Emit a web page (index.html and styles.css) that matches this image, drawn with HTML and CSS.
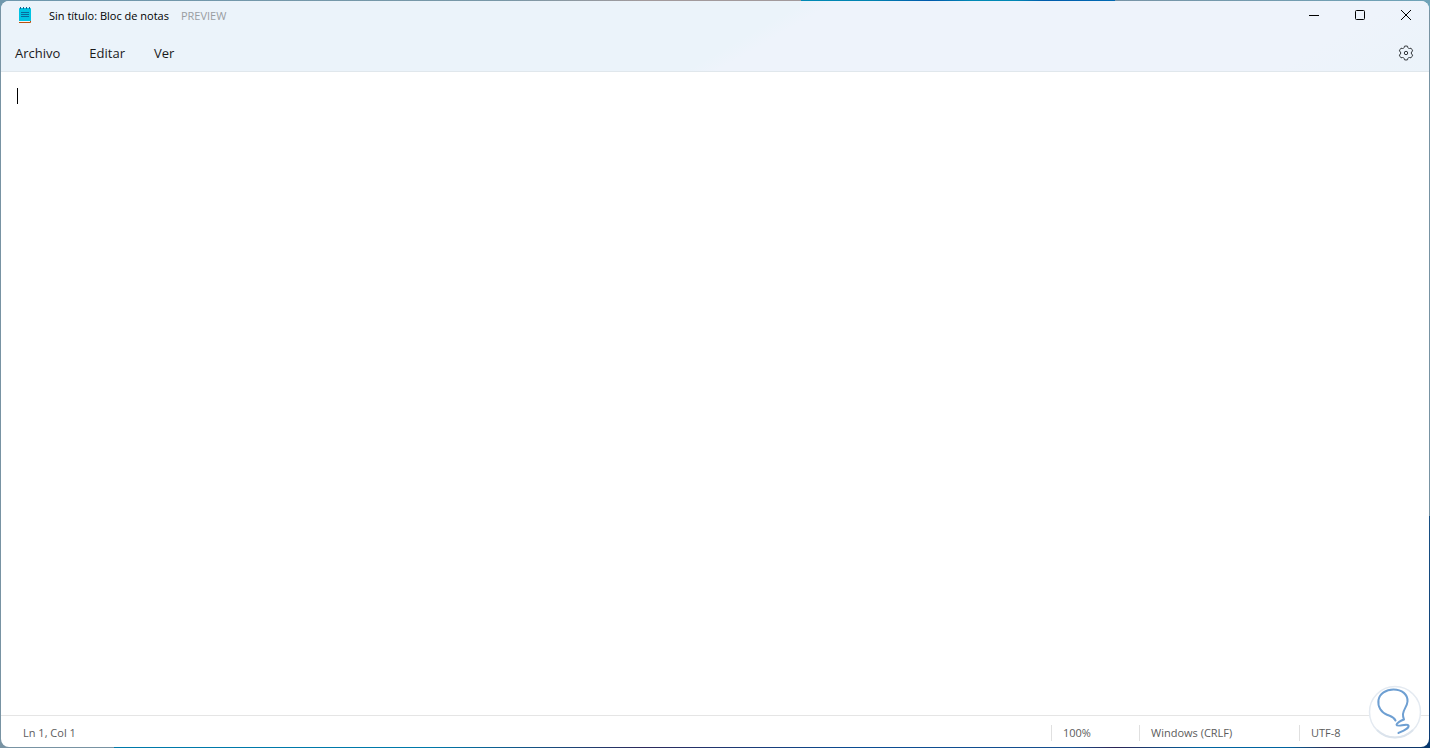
FILE: index.html
```html
<!DOCTYPE html>
<html lang="es">
<head>
    <meta charset="UTF-8">
    <meta name="viewport" content="width=device-width, initial-scale=1.0">
    <link rel="stylesheet" href="styles.css">
    <title>Sin título: Bloc de notas</title>
</head>
<body>
    <div class="window">
        <header class="header">
            <div class="titlebar">
                <svg class="app-icon" width="14" height="18" viewBox="0 0 14 18">
                    <path d="M1 15h12v1q0 1-1 1H1z" fill="#b9500f"/>
                    <path d="M1 14h11v2H1z" fill="#f4f4f4"/>
                    <path d="M1 3q0-1 1-1h10q1 0 1 1v12H1z" fill="#00c3e3"/>
                    <path d="M2.500 1v2M5.500 1v2M8.500 1v2M11.500 1v2" stroke="#17618f"/>
                    <path d="M3 6.500h8M3 8.500h8M3 10.500h8" stroke="#086a9b"/>
                </svg>
                <h1 class="title">Sin título: Bloc de notas</h1>
                <span class="preview">PREVIEW</span>
                <div class="controls">
                    <button type="button" aria-label="Minimizar">
                        <svg width="12" height="12" viewBox="0 0 12 12"><path d="M1 6.500h10"/></svg>
                    </button>
                    <button type="button" aria-label="Maximizar">
                        <svg width="12" height="12" viewBox="0 0 12 12"><rect x="1.500" y="1.500" width="9" height="9" rx="1"/></svg>
                    </button>
                    <button type="button" aria-label="Cerrar">
                        <svg width="12" height="12" viewBox="0 0 12 12"><path d="M1 1l10 10M11 1L1 11"/></svg>
                    </button>
                </div>
            </div>
            <nav class="menubar">
                <button type="button">Archivo</button>
                <button type="button">Editar</button>
                <button type="button">Ver</button>
                <button type="button" class="settings" aria-label="Configuración">
                    <svg width="16" height="16" viewBox="0 0 16 16">
                        <path d="M6.500 1.200Q8 .8 9.500 1.200L9.900 2.600Q10.400 3.700 11.500 3.500L13 3.200Q14.100 4.400 14.600 5.900L13.600 7Q12.800 8 13.600 9L14.600 10.100Q14.100 11.600 13 12.800L11.500 12.500Q10.400 12.300 9.900 13.400L9.500 14.800Q8 15.200 6.500 14.800L6.100 13.400Q5.600 12.300 4.500 12.500L3 12.800Q1.900 11.600 1.400 10.100L2.400 9Q3.200 8 2.400 7L1.400 5.900Q1.900 4.400 3 3.200L4.500 3.500Q5.600 3.700 6.100 2.600Z"/>
                        <circle cx="8" cy="8" r="1.700"/>
                    </svg>
                </button>
            </nav>
        </header>

        <main class="editor">
            <textarea class="text" aria-label="Editor de texto" spellcheck="false"></textarea>
            <span class="caret"></span>
        </main>

        <footer class="statusbar">
            <span class="position">Ln 1, Col 1</span>
            <span class="status zoom">100%</span>
            <span class="status line-ending">Windows (CRLF)</span>
            <span class="status encoding">UTF-8</span>
        </footer>

        <svg class="badge" width="54" height="54" viewBox="0 0 54 54">
            <circle cx="27" cy="27" r="25.500" fill="#fff" stroke="#e4eaf1" stroke-width="1.500"/>
            <path d="M9 45A25.500 25.500 0 0 0 45 45" fill="none" stroke="#dbe3ec" stroke-width="2"/>
            <path d="M27.500 35.500C25.500 31.500 23 31.500 19.500 30C13 27.500 9.500 21.500 10.500 15C11.500 8.500 18 4.500 25.500 4.500C34 4.500 40 9.500 39.500 16.500C39.200 21.500 35.500 24 35 29C34.800 31.500 35.500 33 36 34.500C33 35.500 28.500 38 28.500 39.800C29 42.500 39 38 40.500 40.500C41.500 43.500 35 46 30.500 48" fill="none" stroke="#6e9fd2" stroke-width="2" stroke-linecap="round" stroke-linejoin="round"/>
        </svg>
    </div>
</body>
</html>
```

FILE: styles.css
```css
* {
    box-sizing: border-box;
}

/* The desktop shows as a thin line around the window */
body {
    display: flex;
    height: 100vh;
    margin: 0;
    padding: 1px;
    font-family: "Open Sans", "Noto Sans", sans-serif;
    color: #1a1a1a;
    background:
        linear-gradient(90deg, #6f98ad 0, #7897a7 35%, #a29a9c 45%, #a29a9c 56%, #0089b5 56%, #0082b0 61%, #0058ac 65%, #0089b5 68%, #0087b4 71%, #005bac 73%, #006ab3 78%, #7894a6 78%, #6fa3b8 100%) top / 100% 10px no-repeat,
        linear-gradient(90deg, #7893a3 0, #7893a3 8%, #0079aa 8%, #0079aa 30%, #2c2a5c 45%, #0a4d93 60%, #174f8e 75%, #2b2455 78%, #0064a0 84%, #0064a0 90%, #2b2a50 93%, #07386e 100%) bottom / 100% 10px no-repeat,
        linear-gradient(#7893a3 69%, #174f83 69%, #0b3a73) right / 10px 100% no-repeat,
        #7893a3;
}

button {
    border: 0;
    background: none;
    color: inherit;
    font-family: inherit;
}

.window {
    position: relative;
    flex: 1;
    display: flex;
    flex-direction: column;
    min-width: 0;
    overflow: hidden;
    border-radius: 8px;
    background: #fff;
}

.header {
    border-bottom: 1px solid #e0e7ec;
    background: linear-gradient(150deg, #ebf3fa 0, #ebf3fa 52%, #eef3fb 54%, #eef3fb 90%, #ebf3fa 100%);
}

.titlebar {
    display: flex;
    align-items: center;
    height: 28px;
    padding-left: 17px;
}

.title {
    margin: 0 0 0 17px;
    font-size: 11px;
    font-weight: 400;
    color: #000;
}

.preview {
    margin-left: 12px;
    font-size: 11px;
    color: #999da1;
}

.controls {
    display: flex;
    margin-left: auto;
}

.controls button {
    display: flex;
    align-items: center;
    justify-content: center;
    width: 46px;
    height: 28px;
    padding: 0;
}

.controls svg {
    fill: none;
    stroke: #000;
}

.menubar {
    display: flex;
    align-items: center;
    height: 42px;
    padding: 5px 15px 0 4px;
    gap: 9px;
}

.menubar button {
    padding: 4px 10px;
    font-size: 13px;
}

.menubar .settings {
    display: flex;
    margin-left: auto;
    padding: 0;
}

.settings svg {
    fill: none;
    stroke: #303438;
}

.editor {
    position: relative;
    flex: 1;
    display: flex;
}

.text {
    flex: 1;
    padding: 15px;
    border: 0;
    outline: 0;
    resize: none;
    background: transparent;
    font-family: inherit;
    font-size: 14px;
}

.caret {
    position: absolute;
    top: 16px;
    left: 16px;
    width: 1px;
    height: 16px;
    background: #000;
}

.statusbar {
    display: flex;
    align-items: center;
    height: 32px;
    padding: 2px 0 0 22px;
    border-top: 1px solid #e5e5e5;
    font-size: 11px;
    line-height: 16px;
    color: #5c5c5c;
}

.position {
    margin-right: auto;
}

.status {
    padding-left: 11px;
    border-left: 1px solid #e0e0e0;
}

.zoom {
    width: 88px;
}

.line-ending {
    width: 160px;
}

.encoding {
    width: 130px;
}

.badge {
    position: absolute;
    right: 7px;
    bottom: 8px;
}
```
